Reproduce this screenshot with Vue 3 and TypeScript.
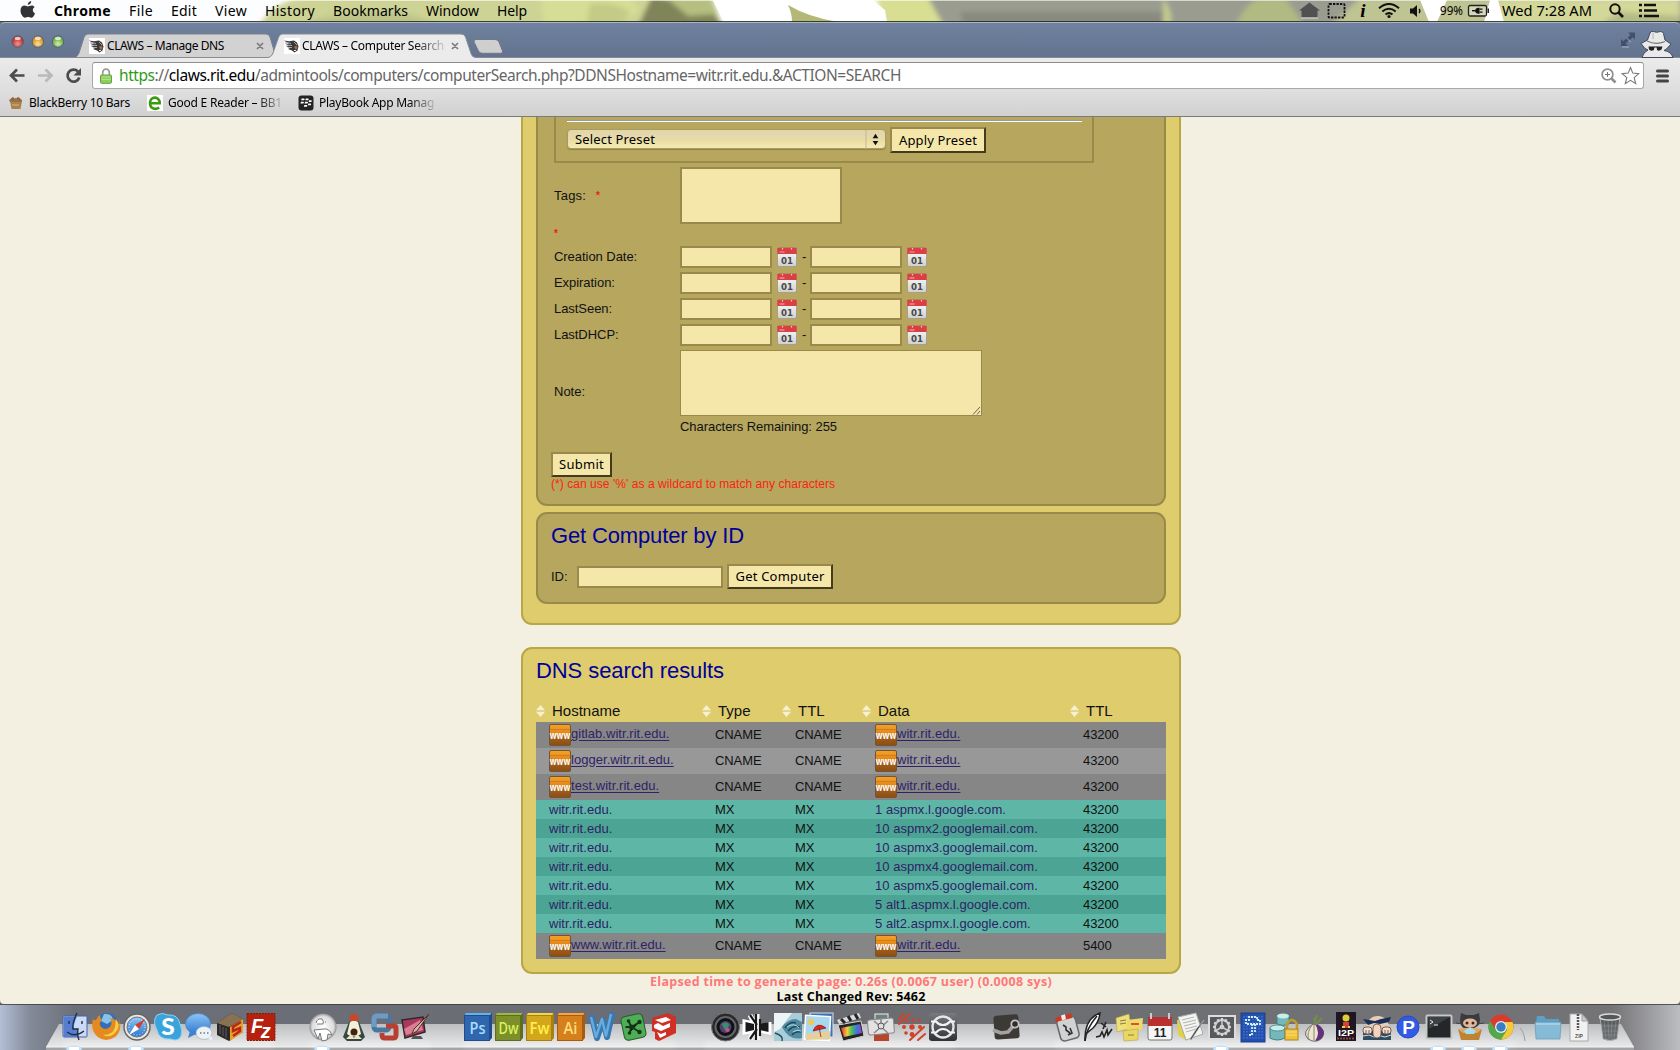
<script setup lang="ts">
import type { Directive } from 'vue'

interface Label { text: string; w: number }
interface DnsRow { host: string; type: string; data: string; ttl: string; tone: string }

// Spreads a label's letters so that it fills the given width in pixels.
const vFit: Directive<HTMLElement, number> = {
  mounted(el, { value }) {
    const n = (el.textContent || '').length
    const natural = el.getBoundingClientRect().width
    if (n) el.style.letterSpacing = ((value - natural) / n).toFixed(3) + 'px'
  },
}

const menus: Label[] = [
  { text: 'Chrome', w: 57 }, { text: 'File', w: 24 }, { text: 'Edit', w: 26 }, { text: 'View', w: 32 },
  { text: 'History', w: 50 }, { text: 'Bookmarks', w: 75 }, { text: 'Window', w: 53 }, { text: 'Help', w: 30 },
]
const dateFields = ['Creation Date:', 'Expiration:', 'LastSeen:', 'LastDHCP:']
const headers = ['Hostname', 'Type', 'TTL', 'Data', 'TTL']
const cname = (host: string, ttl: string, tone: string): DnsRow => ({ host, type: 'CNAME', data: 'witr.rit.edu.', ttl, tone })
const mx = (data: string, tone: string): DnsRow => ({ host: 'witr.rit.edu.', type: 'MX', data, ttl: '43200', tone })
const rows: DnsRow[] = [
  cname('gitlab.witr.rit.edu.', '43200', 'gray'),
  cname('logger.witr.rit.edu.', '43200', 'gray light'),
  cname('test.witr.rit.edu.', '43200', 'gray'),
  mx('1 aspmx.l.google.com.', 'teal light'),
  mx('10 aspmx2.googlemail.com.', 'teal'),
  mx('10 aspmx3.googlemail.com.', 'teal light'),
  mx('10 aspmx4.googlemail.com.', 'teal'),
  mx('10 aspmx5.googlemail.com.', 'teal light'),
  mx('5 alt1.aspmx.l.google.com.', 'teal'),
  mx('5 alt2.aspmx.l.google.com.', 'teal light'),
  cname('www.witr.rit.edu.', '5400', 'gray'),
]
const adobe = [
  { t: 'Ps', x: 478, c: '#2f66ad', d: '#1f4c8a', f: '#a6dcff', h: '#5fb3ee' },
  { t: 'Dw', x: 509, c: '#7c8f2b', d: '#5d6f1e', f: '#d8f25a', h: '#9db843' },
  { t: 'Fw', x: 540, c: '#d2a71c', d: '#a87f10', f: '#fff04a', h: '#f4d64a' },
  { t: 'Ai', x: 571, c: '#d5801c', d: '#a95a0e', f: '#ffdb7a', h: '#f4a63d' },
]
const running = [74, 136, 322, 1221, 1438, 1469, 1500]
const gear = [0, 30, 60, 90, 120, 150, 180, 210, 240, 270, 300, 330]
</script>

<template>
  <div class="desktop">
    <svg width="0" height="0" class="defs" aria-hidden="true">
      <defs>
        <linearGradient id="orange" x1="0" y1="0" x2="0" y2="1">
          <stop offset="0" stop-color="#f7a128" /><stop offset=".45" stop-color="#df8518" /><stop offset=".55" stop-color="#a9621a" /><stop offset="1" stop-color="#8a4d14" />
        </linearGradient>
        <linearGradient id="paper" x1="0" y1="0" x2="0" y2="1">
          <stop offset="0" stop-color="#fff" /><stop offset="1" stop-color="#cfcfcf" />
        </linearGradient>
        <linearGradient id="shelf" x1="0" y1="0" x2="0" y2="1">
          <stop offset="0" stop-color="#bdbec0" /><stop offset=".5" stop-color="#d3d4d5" /><stop offset="1" stop-color="#e9e9ea" />
        </linearGradient>
        <linearGradient id="back" x1="0" y1="0" x2="1" y2="0">
          <stop offset="0" stop-color="#b3bfd6" /><stop offset=".018" stop-color="#838a98" /><stop offset=".045" stop-color="#6b6f78" />
          <stop offset=".5" stop-color="#6a6c71" /><stop offset=".96" stop-color="#747477" /><stop offset="1" stop-color="#bcbdc1" />
        </linearGradient>
        <linearGradient id="blue" x1="0" y1="0" x2="0" y2="1">
          <stop offset="0" stop-color="#8cc4f5" /><stop offset="1" stop-color="#2c78d0" />
        </linearGradient>
        <linearGradient id="steel" x1="0" y1="0" x2="0" y2="1">
          <stop offset="0" stop-color="#777a7f" /><stop offset="1" stop-color="#2f3135" />
        </linearGradient>
        <linearGradient id="spectrum" x1="0" y1="0" x2="1" y2="0">
          <stop offset="0" stop-color="#e03030" /><stop offset=".3" stop-color="#f0d040" /><stop offset=".5" stop-color="#50c050" /><stop offset=".75" stop-color="#3878e0" /><stop offset="1" stop-color="#a040c0" />
        </linearGradient>
        <radialGradient id="silver"><stop offset="0" stop-color="#fff" /><stop offset=".8" stop-color="#dcdcdc" /><stop offset="1" stop-color="#8d8f92" /></radialGradient>
        <filter id="soft" x="-5%" y="-60%" width="110%" height="220%"><feGaussianBlur stdDeviation="2.5" /></filter>
        <symbol id="cal" viewBox="0 0 20 20">
          <rect x=".5" y="1" width="19" height="18.6" rx="1.6" fill="url(#paper)" stroke="#8d8880" stroke-width=".6" />
          <path d="M.3 1.500Q.3 .8 1 .8H19Q19.700 .8 19.700 1.500V7H.3Z" fill="#d93f43" /><path d="M2.500 5h5" stroke="#f0a09c" stroke-width="1.200" />
          <path d="M5.500 1v1.500M14.500 1v1.500" stroke="#f6c9c6" stroke-width="1.200" />
          <text x="10" y="16.900" text-anchor="middle" font-size="9.500" font-weight="700" fill="#484848" font-family="DejaVu Sans, sans-serif" textLength="12" lengthAdjust="spacingAndGlyphs">01</text>
        </symbol>
        <symbol id="www" viewBox="0 0 22 22">
          <rect x=".5" y=".5" width="21" height="21" rx="1.5" fill="url(#orange)" stroke="#6e5636" stroke-width="1" />
          <path d="M1 5.500H21" stroke="#c9791b" stroke-width=".8" />
          <text x="11" y="14.600" text-anchor="middle" font-size="11" font-weight="700" fill="#fff" font-family="Open Sans, sans-serif" textLength="20.500" lengthAdjust="spacingAndGlyphs">www</text>
        </symbol>
        <symbol id="tiger" viewBox="0 0 16 16">
          <rect width="16" height="16" fill="#fff" />
          <path d="M0 2.500l5 .8 5-.8 3 2 1.500 4-1 4-3 2-2.500-2-4-1.500 2-1-4-1.500 3-.5-4-2.500 4 .5Z" fill="#3a3a3a" />
          <path d="M1 4l6 1.500M2 7l6 .5M4 9.500l4 0M10 4l3 3" stroke="#b5b5b5" stroke-width=".9" fill="none" /><path d="M10 9l2.500-1.500 1 2.500-1.500 2Z" fill="#b06a48" /><path d="M10 12.500l1.800 0" stroke="#fff" />
        </symbol>
      </defs>
    </svg>

    <header class="menubar">
      <svg class="wallpaper" viewBox="0 0 1680 22" width="1680" height="22" aria-hidden="true">
        <rect width="1680" height="22" fill="#fcfdfe" />
        <g filter="url(#soft)">
          <path d="M260 26C266 12 276 6 290 0L300-4H712L722 26Z" fill="#cdd394" />
          <path d="M300 26Q330 10 400 12L450 26Z" fill="#bcc487" /><path d="M540-3h90l10 12-20 17h-75Z" fill="#d5de94" />
          <path d="M652-4l-14 30h85l-10-14-34-10Z" fill="#7f8558" /><path d="M590 4q25-3 40 8l-8 14h-36Z" fill="#c3cb86" /><path d="M664-4h46l8 18-30 2Z" fill="#b6bf80" />
          <path d="M876-4l8 30h62l-14-30Z" fill="#d8de92" />
          <path d="M926-6l18 32h740V-6Z" fill="#9a9c90" /><path d="M960 12h210v14h-206Z" fill="#888a7e" /><path d="M1163-2q10 12 8 26h-8Z" fill="#c5ca90" />
          <path d="M1235 26q10-22 24-28h26l20 28Z" fill="#b0ba82" /><path d="M1330 26l30-28h140l30 28Z" fill="#bfc493" /><path d="M1500-2h180v28h-190Z" fill="#d3d898" />
          <path d="M1600 24l20-12 60 4v10Z" fill="#b3bb85" />
        </g>
        <path d="M712-1l12 23h66l-3-18q22 13 50 18h50l-2-12-14-11ZM1420 0l9 22h8l10-22ZM1490 0l-6 22h20l-6-22Z" fill="#fff" />
        <path d="M788 5q20 12 50 17h-46q0-9-4-17Z" fill="#b4b877" />
        <path d="M0 .5H1680" stroke="#fff" stroke-opacity=".6" /><path d="M0 21.5H1680" stroke="#22251d" stroke-opacity=".85" />
      </svg>
      <svg class="apple" viewBox="0 0 16 18" width="16" height="18"><path d="M11.200 0c.2 2-1.600 3.900-3.400 3.800C7.600 2 9.400.2 11.200 0ZM15 12.400c-1 2.600-2.400 4.300-3.900 4.300-1.200 0-1.700-.7-3-.7s-1.900.7-3 .7C2.800 16.700.5 12.900.5 9.600.5 6.400 2.400 4.600 4.500 4.600c1.400 0 2.400.9 3.400.9.900 0 2.100-1 3.800-1 1.200 0 2.300.6 3 1.600-2.700 1.700-2.300 5.200.3 6.300Z" fill="#333" /></svg>
      <nav class="menus">
        <span v-for="m in menus" :key="m.text" v-fit="m.w">{{ m.text }}</span>
      </nav>
      <div class="status">
        <svg width="366" height="22" viewBox="1296 0 366 22">
          <path d="M1309.500 2.500L1320 10.500H1317.500V17.500H1301.500V10.500H1299Z" fill="#515151" /><path d="M1301 18h17" stroke="#ddd" />
          <rect x="1328.500" y="4" width="16" height="13.500" rx="1" fill="none" stroke="#111" stroke-width="1.800" stroke-dasharray="2.300 1.200" />
          <text x="1363" y="17" text-anchor="middle" font-family="Liberation Serif, serif" font-weight="700" font-style="italic" font-size="19">i</text>
          <g fill="none" stroke="#111" stroke-width="2"><path d="M1379 8.200q10-8.400 20 0M1382.300 11.500q6.700-5.400 13.400 0M1385.500 14.500q3.500-2.800 7 0" /></g><circle cx="1389" cy="16.500" r="1.600" fill="#111" />
          <path d="M1410 8.500h3l4-3.500v12l-4-3.500h-3Z" fill="#111" /><path d="M1419 9q1.800 2 0 4" stroke="#111" stroke-width="1.300" fill="none" />
          <text x="1440" y="15" font-size="12" textLength="23" lengthAdjust="spacingAndGlyphs">99%</text>
          <rect x="1468.500" y="5.500" width="18" height="10.500" rx="1.500" fill="#e4e5d5" fill-opacity=".6" stroke="#222" stroke-width="1.300" /><rect x="1487.500" y="8.500" width="1.500" height="4.500" fill="#222" />
          <path d="M1472 10.700h3.500" stroke="#111" stroke-width="1.400" /><path d="M1475 10.700q.5-3 3.500-3h1v6h-1q-3 0-3.500-3Z" fill="#111" /><path d="M1479.500 9.200h3M1479.500 12.200h3" stroke="#111" stroke-width="1.300" />
          <text x="1502" y="15.500" font-size="14" textLength="90" lengthAdjust="spacingAndGlyphs">Wed 7:28 AM</text>
          <circle cx="1615" cy="9" r="4.700" fill="none" stroke="#111" stroke-width="2" /><path d="M1618.500 12.500l4.500 4.500" stroke="#111" stroke-width="2.600" />
          <path d="M1639 5h3M1644 5h12M1639 10.500h3M1644 10.500h13M1639 16h3M1644 16h15" stroke="#111" stroke-width="2.700" />
        </svg>
      </div>
    </header>

    <section class="browser">
      <div class="tabstrip">
        <svg class="tabshapes" width="1680" height="36" viewBox="0 22 1680 36" aria-hidden="true">
          <defs>
            <radialGradient id="red" cy=".7"><stop offset="0" stop-color="#f5938d" /><stop offset="1" stop-color="#bc3833" /></radialGradient>
            <radialGradient id="amber" cy=".7"><stop offset="0" stop-color="#ffe09a" /><stop offset="1" stop-color="#d39325" /></radialGradient>
            <radialGradient id="green" cy=".7"><stop offset="0" stop-color="#cdf1a9" /><stop offset="1" stop-color="#70a848" /></radialGradient>
          </defs>
          <g stroke="#4e5667" stroke-width=".8"><circle cx="17.700" cy="41.500" r="5.700" fill="url(#red)" /><circle cx="37.900" cy="41.500" r="5.700" fill="url(#amber)" /><circle cx="58" cy="41.500" r="5.700" fill="url(#green)" /></g>
          <g fill="#fff" fill-opacity=".7"><ellipse cx="17.700" cy="38.400" rx="3" ry="1.700" /><ellipse cx="37.900" cy="38.400" rx="3" ry="1.700" /><ellipse cx="58" cy="38.400" rx="3" ry="1.700" /></g>
          <path d="M75 57.500Q78 56 79 53L84 37.500Q85 34 88 34H266Q269 34 270 37L276 57.500Z" fill="#d2d2d2" stroke="#7b818c" />
          <path d="M0 57.500H267Q271.500 57.500 273 53L278.500 37.500Q279.500 34 282.500 34H461Q464.500 34 465.500 37L471 53.500Q472 57.500 476 57.500H1680V60H0Z" fill="#ebebeb" stroke="#868b95" />
          <path d="M476 39.500H495Q498 39.500 499 42L502.500 51Q503 53.300 500.500 53.300H482Q479.500 53.300 478.500 51L474 42Q473.500 39.500 476 39.500Z" fill="#cfcfcf" stroke="#70788a" />
          <use href="#tiger" x="89" y="38" width="16" height="16" /><use href="#tiger" x="284" y="38" width="16" height="16" />
          <path d="M257 43l6 6m0-6l-6 6M452 43l6 6m0-6l-6 6" stroke="#7c7c7c" stroke-width="1.700" />
          <g fill="#42506a"><path d="M1628 32.500h7v7l-2.300-2.300-2.700 2.700-2.300-2.300 2.700-2.700ZM1621 46v-7l2.300 2.300 2.700-2.700 2.300 2.300-2.700 2.700 2.400 2.400Z" /></g><path d="M1622 47h7M1629 40.500l2 1.500" stroke="#b9c1cf" stroke-width=".8" />
          <path d="M1642 57.500q1-5 6-7.500l-3-1.500-4-5 6.500-3.500 2.500-7q.5-2 3.500-1.500l3 .8 4-.8q2.500 0 3 2l1.500 6.500 6 4-4.500 5-2.500 1.500q7 1 9 7Z" fill="#e9e9e9" stroke="#424a59" stroke-width="1" />
          <path d="M1647 41q9 4.500 18 .5" stroke="#777" stroke-width="1.200" fill="none" /><path d="M1653 33v6" stroke="#b3b3b3" fill="none" /><path d="M1648.500 46.500h6l-.5 3.500q-3.500 1.500-5-.5ZM1656.500 46.500h6l-1 3q-2.500 2-4.500.5Z" fill="#222" /><path d="M1654 47h3" stroke="#222" />
        </svg>
        <span class="tabname first"><span v-fit="117">CLAWS – Manage DNS</span></span>
        <span class="tabname second"><span v-fit="142">CLAWS – Computer Search</span></span>
      </div>
      <div class="toolbar">
        <svg class="nav" width="92" height="30" viewBox="0 60 92 30">
          <g fill="none" stroke-width="2.700"><path d="M24.500 75.500H11M17 69.500L11 75.500l6 6" stroke="#4c4c4c" /><path d="M38 75.500H51.500M45.500 69.500l6 6-6 6" stroke="#b9b9b9" /><path d="M78 71.500A6 6 0 1 0 79.300 77.500" stroke="#4c4c4c" /></g><path d="M81 68v7.500h-7.500Z" fill="#4c4c4c" />
        </svg>
        <div class="omnibox">
          <svg class="lock" width="12" height="16" viewBox="0 0 12 16"><path d="M2.700 8V4.500a3.300 3.300 0 0 1 6.600 0V8" fill="none" stroke="#9a9a9a" stroke-width="1.700" /><rect x=".5" y="7" width="11" height="8.300" rx="1" fill="#8fcf62" stroke="#65a23e" /><path d="M1.500 9h9M1.500 11.500h9" stroke="#b7e495" stroke-width=".8" /></svg>
          <span class="url" v-fit="782"><span class="scheme">https</span>://<span class="host">claws.rit.edu</span>/admintools/computers/computerSearch.php?DDNSHostname=witr.rit.edu.&amp;ACTION=SEARCH</span>
          <svg class="actions" width="40" height="20" viewBox="1600 66 40 20"><circle cx="1607.500" cy="74.500" r="5.400" fill="none" stroke="#8f8f8f" stroke-width="1.700" /><path d="M1611.500 78.500l4 4" stroke="#8f8f8f" stroke-width="2.600" /><path d="M1605 74.500h5M1607.500 72v5" stroke="#777" /><path d="M1630.500 67.500l2.300 5.600 6 .5-4.600 4 1.500 6-5.200-3.300-5.200 3.300 1.500-6-4.600-4 6-.5Z" fill="#fff" stroke="#777" stroke-width="1.100" /></svg>
        </div>
        <svg class="burger" width="13" height="14" viewBox="0 0 13 14"><path d="M1.500 2h10M1.500 7h10M1.500 12h10" stroke="#444" stroke-width="3" stroke-linecap="round" /></svg>
      </div>
      <div class="bookmarks">
        <svg width="14" height="14" viewBox="0 0 14 14"><path d="M1 5h12l-1.500 8h-9Z" fill="#a9834b" /><path d="M0 4l4-3 2 2 3-2 4 3v2H1Z" fill="#8c7550" /><path d="M3 2l2 2M9 2l2 2" stroke="#cb4736" stroke-width="2" /><path d="M6 3h2" stroke="#5c9a4e" stroke-width="2" /><path d="M3 9h7" stroke="#d9b77c" /></svg>
        <span class="bm1"><span v-fit="101">BlackBerry 10 Bars</span></span>
        <svg class="ebox" width="16" height="16" viewBox="0 0 16 16"><rect width="16" height="16" fill="#fff" /><path d="M3 8.200H12.700C13 1 3 .5 3 8c0 6.500 6 6.800 9.200 4.500" fill="none" stroke="#3a9a12" stroke-width="2.600" /></svg>
        <span class="bm2 fade"><span v-fit="114">Good E Reader – BB1</span></span>
        <svg width="16" height="16" viewBox="0 0 16 16"><rect x=".5" y=".5" width="15" height="15" rx="3" fill="#242424" /><g fill="#fff"><path d="M3.600 3.500h2.600q1 .9-.2 1.800H3.200ZM7.700 3.500h2.600q1 .9-.2 1.800H7.300ZM2.900 6.700h2.600q1 .9-.2 1.800H2.500ZM7 6.700h2.600q1 .9-.2 1.800H6.600ZM11 5.300h2.400q1 .9-.2 1.700H10.600ZM10.300 8.600h2.400q1 .9-.2 1.700H9.900ZM6.300 10h2.600q1 .9-.2 1.800H5.900Z" /></g></svg>
        <span class="bm3 fade"><span v-fit="115">PlayBook App Manag</span></span>
      </div>

      <main class="page">
        <section class="card search">
          <div class="pane form">
            <div class="preset">
              <div class="rule"></div>
              <div class="presetrow">
                <div class="select"><span v-fit="80">Select Preset</span><svg width="20" height="19" viewBox="0 0 20 20"><path d="M.5 0v20" stroke="#c2b68b" /><path d="M7.500 8.600h6L10.500 4ZM7.500 11.500h6l-3 4.600Z" fill="#111" /></svg></div>
                <div class="btn apply"><span v-fit="78">Apply Preset</span></div>
              </div>
            </div>
            <div class="row tags"><label>Tags: <i class="star">*</i></label><div class="box tagbox"></div></div>
            <div class="starrow"><i class="star">*</i></div>
            <div v-for="d in dateFields" :key="d" class="row date">
              <label>{{ d }}</label><div class="box day"></div><svg width="20" height="20"><use href="#cal" /></svg><b class="dash">-</b><div class="box day"></div><svg width="20" height="20"><use href="#cal" /></svg>
            </div>
            <div class="row note"><label>Note:</label>
              <div><div class="area"><svg width="9" height="9" viewBox="0 0 9 9"><path d="M1 8.500L8 1M5 8.500L8 5" stroke="#555" stroke-width=".9" /></svg></div><p><span v-fit="157">Characters Remaining: 255</span></p></div>
            </div>
            <div class="btn submit"><span v-fit="45">Submit</span></div>
            <p class="hint"><span v-fit="284">(*) can use '%' as a wildcard to match any characters</span></p>
          </div>
          <div class="pane byid">
            <h2><span v-fit="193">Get Computer by ID</span></h2>
            <div class="idrow"><label>ID:</label><div class="box idbox"></div><div class="btn get"><span v-fit="89">Get Computer</span></div></div>
          </div>
        </section>

        <section class="card results">
          <h2><span v-fit="188">DNS search results</span></h2>
          <div class="grid head">
            <span v-for="(h, i) in headers" :key="i"><svg width="9" height="12" viewBox="0 0 9 12"><path d="M0 5.300L4.500 0 9 5.300ZM0 6.700h9L4.500 12Z" fill="#f6f0d2" /></svg><em>{{ h }}</em></span>
          </div>
          <div v-for="(r, i) in rows" :key="i" class="grid line" :class="r.tone">
            <span class="link"><svg v-if="r.type === 'CNAME'" width="22" height="22"><use href="#www" /></svg><a>{{ r.host }}</a></span>
            <span class="kind">{{ r.type }}</span><span class="kind">{{ r.type }}</span>
            <span class="link"><svg v-if="r.type === 'CNAME'" width="22" height="22"><use href="#www" /></svg><a>{{ r.data }}</a></span>
            <span class="kind">{{ r.ttl }}</span>
          </div>
        </section>
        <footer>
          <p class="elapsed"><span v-fit="402">Elapsed time to generate page: 0.26s (0.0067 user) (0.0008 sys)</span></p>
          <p><span v-fit="149">Last Changed Rev: 5462</span></p>
        </footer>
      </main>
    </section>

    <svg class="dock" width="1680" height="46" viewBox="0 1004 1680 46">
      <rect y="1004" width="1680" height="46" fill="url(#back)" />
      <path d="M0 1004h1680" stroke="#33363b" stroke-width="1.600" />
      <path d="M59 1024H1621L1634 1047H46Z" fill="url(#shelf)" /><path d="M46 1047H1634V1050H46Z" fill="#a3a4a6" /><path d="M46 1047H1634" stroke="#f6f6f6" stroke-width="1.200" />
      <g fill="#fff" fill-opacity=".32" filter="url(#soft)"><path d="M64 1042h210v5H64ZM310 1042h120v5H310ZM464 1042h212v5H464ZM705 1042h250v5H705ZM1055 1042h460v5h-460Z" /></g>
      <g v-for="x in running" :key="x" :transform="`translate(${x} 1048.500)`"><ellipse rx="8" ry="3" fill="#bfe3ff" /><rect x="-5" y="-1.500" width="10" height="3" fill="#fff" /></g>

      <!-- Finder, Firefox, Safari, Skype, Messages, archive cube, FileZilla -->
      <g transform="translate(75 1027)"><rect x="-12" y="-11" width="24" height="21" rx="1" fill="#c9dbf6" stroke="#4863a8" /><path d="M-11.500-10.500H2Q-2-2-1 2h3l1 8h-14.500Z" fill="#567ed0" /><path d="M2-14Q-3-4-2 2H3Q2 8 4 13M-8 5Q0 11 9 4M-6-6v3M7-6v3" fill="none" stroke="#222c45" stroke-width="1.400" /></g>
      <g transform="translate(106 1027)"><circle cx="1" cy="-3" r="11" fill="#356fb5" /><path d="M-2-13q8-1 9 6l-6 4-6-3Z" fill="#86c3e9" /><path d="M-13-8q2 2 3 1 2-4 4-5 0 4 2 5-4 3-1 7 4 4 9 0 3-4 0-9 8 1 9 8 1-2 0-8 4 12-4 19-9 6-17 0-8-6-5-18Z" fill="#e68a20" /><path d="M10-8q6 8-2 15-5 4-11 1 10 0 12-8Z" fill="#f7cd42" /></g>
      <g transform="translate(137 1027)"><circle r="13" fill="#e7e7e7" stroke="#666" stroke-width="1.500" /><circle r="10" fill="url(#blue)" stroke="#777" stroke-width="1" /><circle r="8" fill="none" stroke="#e5f2fd" stroke-dasharray="1 2" /><path d="M8-8L2 2-2-2Z" fill="#d83d2a" /><path d="M-8 8L2 2-2-2Z" fill="#fff" /></g>
      <g transform="translate(168 1027)"><path d="M-11-12Q-6-15 0-12 10-13 12-3 15 3 13 9 10 15 3 12-9 13-11 3-16-6-11-12Z" fill="#3ba3dc" stroke="#8fd1f4" /><text x="0" y="8" text-anchor="middle" font-family="Lato" font-size="22" font-weight="900" fill="#fff" textLength="13.500" lengthAdjust="spacingAndGlyphs">S</text></g>
      <g transform="translate(199 1027)"><ellipse cx="-1" cy="-3" rx="12.500" ry="10.500" fill="url(#blue)" stroke="#4386c5" stroke-width=".7" /><path d="M-9 4l-2 7 8-4Z" fill="#3c82d2" /><ellipse cx="5" cy="6" rx="8" ry="6.500" fill="#edf2f7" stroke="#9eb1c6" stroke-width=".7" /><path d="M9 11l4 3v-5Z" fill="#edf2f7" /><path d="M1 6h1.500M4.500 6h1.500M8 6h1.500" stroke="#6c7a8a" stroke-width="1.700" /></g>
      <g transform="translate(230 1027)"><path d="M-13-4L2-14l11 6V5L-1 14-13 8Z" fill="#2c2a28" /><path d="M-13-4L2-14l11 6L-1 0Z" fill="#887252" /><path d="M0 0L13-8V5L0 14Z" fill="#e7a425" /><path d="M11-5L3 0v4l7-3v3L3 9" fill="none" stroke="#bb261c" stroke-width="2.500" /><path d="M-10-2v9M-7 0v9M-4 1v10" stroke="#6b6a68" stroke-width=".8" /></g>
      <g transform="translate(261 1027)"><rect x="-14" y="-13.500" width="28" height="27" fill="#b5200f" stroke="#82170c" stroke-dasharray="2 1" /><text x="-10" y="6" font-family="Liberation Sans" font-size="20" font-style="italic" font-weight="700" fill="#fff">F<tspan dx="-2.500" dy="4.500">z</tspan></text></g>
      <!-- Growl, rocket, VMware, sketch pad -->
      <g transform="translate(323 1027)"><circle r="13.500" fill="url(#silver)" /><path d="M-7-4q1-5 6-4 2 2 1 5h-6M2-5h1M-9 3l4 9 2-6 2 8 5-1 1-6 4 1q-3-7-8-6Z" fill="#fff" stroke="#6b6b6b" stroke-width=".9" /></g>
      <g transform="translate(354 1027)"><path d="M-5-5q5-6 10 0l6 15-4 4H-7l-4-4Z" fill="#344741" /><path d="M-4-5q4-3 8 0l3 12q-7 5-14 0Z" fill="#f4efd9" /><path d="M-4-6q-2-5 2-7h4q4 2 2 7Z" fill="#c7472c" /><path d="M-8 12l5-5 3 4 3-4 5 5Z" fill="#eee4c7" /><circle cy="5" r="3.500" fill="#42230e" /></g>
      <g transform="translate(385 1027)" fill="none" stroke-width="5"><rect x="-11" y="-11" width="15" height="14" rx="3" stroke="#49769f" /><path d="M1-1h8q2 0 2 2v7q0 3-3 3H0q-3 0-3-3V6" stroke="#b74032" /><path d="M-11 0v-8q0-3 3-3H3" stroke="#6e9bc4" /></g>
      <g transform="translate(416 1027)"><path d="M-14-7L7-10l2 15-20 6Z" fill="#a8385c" stroke="#2f292a" stroke-width="1.500" /><path d="M-12 2L4-7l3 10-17 5Z" fill="#dc7d94" /><path d="M13-13L1 4l-5 3 2-5Z" fill="#d3b4a8" stroke="#51322a" /><path d="M-5 12h12l-2-3h-8Z" fill="#555" /></g>
      <!-- Creative suite -->
      <g v-for="a in adobe" :key="a.t" :transform="`translate(${a.x} 1027)`"><path d="M-14-11l2-3H13v26l-2 2Z" :fill="a.h" /><rect x="-13.500" y="-11.500" width="25" height="25" :fill="a.c" :stroke="a.d" /><path d="M12-12l2-2v25l-2 2Z" :fill="a.d" /><text x="-.5" y="7" text-anchor="middle" font-family="Open Sans" font-size="16" font-weight="600" :fill="a.f" :textLength="a.t === 'Ps' ? 16 : a.t === 'Ai' ? 14 : 20" lengthAdjust="spacingAndGlyphs">{{ a.t }}</text></g>
      <!-- Word, OmniGraffle, SketchUp -->
      <g transform="translate(602 1027)"><path d="M-10-9L-5 11 1-7 5 10 10-12" fill="none" stroke="#3478b4" stroke-width="6" stroke-linejoin="round" stroke-linecap="round" /><path d="M-11-10L-6 10 0-8 4 9 9-13" fill="none" stroke="#68aadb" stroke-width="2.500" stroke-linejoin="round" /></g>
      <g transform="translate(633.500 1027)"><rect x="-11" y="-12" width="22" height="24" rx="4" transform="rotate(-12)" fill="#4fae55" stroke="#255c2a" /><path d="M-4 6L-2 0l8-5M-2 0l8 5M-2 0l-3-6M-2 0h-6" stroke="#143617" stroke-width="1.800" /><g fill="#143617"><circle cx="-2" r="2.500" /><circle cx="6" cy="-5" r="2.200" /><circle cx="6" cy="5" r="2.200" /><circle cx="-5" cy="-6" r="1.800" /><circle cx="-4" cy="6" r="1.800" /></g></g>
      <g transform="translate(664 1027)"><path d="M-12-9L4-14l8 4V6L-5 14-9 12V5L-12 4Z" fill="#cf2f24" /><path d="M-9-7L2-10l5 3-9 3ZM-10-2l4-2 5 3 7-3v4L-3 4-10 1ZM-7 5l4 2 5-2v3l-6 3Z" fill="#fff" /></g>
      <!-- Camera, butterfly, rose, photos, clapper, machine, dots, wheel -->
      <g transform="translate(725.500 1027)"><circle r="14" fill="#26282a" stroke="#777" /><circle r="10" fill="#111" stroke="#62666b" stroke-width="2" /><circle r="6" fill="#573c6b" /><path d="M-4-3q5-4 8 1l-4 6Z" fill="#388e72" /><circle cx="2" cy="3" r="2" fill="#c1568d" /></g>
      <g transform="translate(757 1027)"><g stroke="#fff" stroke-width="5" fill="none"><path d="M-12-5v10L-2 3v-6ZM12-5V5L2 3v-6M-7-12L0 2M-7 12L0-2M0-13v26" /></g><g stroke="#1a1a1a" stroke-width="2.200" fill="none"><path d="M-7-12L0-2M-7 12L0 2M-1-13v26M3-8V9" /></g><path d="M-11.500-5L-3-3v6l-8.500 2ZM11.500-5L3-3v6l8.500 2Z" fill="#1a1a1a" /></g>
      <g transform="translate(788 1027)"><rect x="-14" y="-14" width="28" height="28" fill="#a9ccd9" /><path d="M-14-14H4L-8 2l-6 3Z" fill="#edf4f7" /><path d="M-6 0q6-8 14-8l6 3v16q-13 3-20-11Z" fill="#4f8aa0" /><path d="M-3 1q5-7 11-5M0 4q5-6 12-4M4 8q3-4 9-3M-6 14q2-5-7-8" fill="none" stroke="#1c4a5d" stroke-width="1.500" /><path d="M-1 0q7-5 12 1M5 5q4-3 8-1" stroke="#b8dce7" fill="none" /></g>
      <g transform="translate(819 1027)"><rect x="-9" y="-14" width="23" height="24" fill="#3f72b4" stroke="#d9dfe7" /><rect x="-14" y="-11" width="25" height="24" transform="rotate(3)" fill="#a8d9ef" stroke="#fff" stroke-width="1.500" /><path d="M-13 7l24-3v8l-24 1Z" fill="#e8cf98" /><circle cx="-8" cy="-5" r="3" fill="#f6c94b" /><path d="M-6 4q4-10 13-3ZM0 0l2 10" fill="#db2d20" stroke="#8b201a" stroke-width=".8" /></g>
      <g transform="translate(850 1027)"><path d="M-12-2L11-6l3 15-21 5Z" fill="#242528" stroke="#d3d3d3" /><path d="M-9 1l19-4 2 9-18 4Z" fill="url(#spectrum)" /><path d="M-13-7L9-14l2 5-22 6Z" fill="#dadada" /><path d="M-9-8l4 4M-2-11l3 5M5-13l3 5" stroke="#252525" stroke-width="3" /></g>
      <g transform="translate(881 1027)"><rect x="-6" y="-13" width="13" height="26" fill="#6f7f7f" stroke="#eee" /><path d="M-7 7H8v7H-7Z" fill="#b7472a" /><rect x="-13" y="-8" width="26" height="15" rx="2" transform="rotate(-5)" fill="#e2e2e2" stroke="#888" /><path d="M-7-6L7 6M7-6L-7 6M0-9V2" stroke="#8b8b8b" stroke-width="1.600" /><circle cy="-1" r="3" fill="#ddd" stroke="#555" /></g>
      <g transform="translate(912 1027)" fill="#d0432a"><circle r="2.700" /><circle cx="-8" r="2" /><circle cx="8" r="2" /><circle cy="7.500" r="2.400" /><circle cx="1" cy="-7" r="1.800" /><circle cx="-6" cy="6" r="1.800" /><circle cx="7" cy="-7" r="1.600" /><circle cx="-5" cy="-6" r="1.600" /><path d="M-13-3L-2-13M-2 13L12 0M6 13l7-6M-13-8l5-5" stroke="#d0432a" stroke-width="2" stroke-linecap="round" /></g>
      <g transform="translate(943 1027)"><rect x="-14" y="-14" width="28" height="28" rx="3" fill="url(#steel)" /><circle r="10.500" fill="none" stroke="#e6e6e6" stroke-width="2.300" /><path d="M-12-5.500h5q3 3.500 7 3.500t7-3.500h5M-12 5.500h5q3-3.500 7-3.500t7 3.500h5" fill="none" stroke="#f1f1f1" stroke-width="2.200" /></g>
      <!-- Steam, disk tool, quill, Stickies, Calendar, TextEdit, Preferences -->
      <g transform="translate(1006 1027)"><rect x="-12" y="-12" width="25" height="24" rx="3" transform="rotate(-4)" fill="#3d3a36" /><path d="M-13 3l8 3 7-1 7-8" stroke="#a2a2a0" stroke-width="3.500" fill="none" stroke-linejoin="round" /><circle cx="9" cy="-3" r="3.700" fill="#302e2c" stroke="#c4c4c2" stroke-width="1.800" /></g>
      <g transform="translate(1067 1027)"><rect x="-9" y="-9" width="19" height="22" rx="4" transform="rotate(-15)" fill="#d1d2d3" stroke="#66686a" stroke-width="1.500" /><path d="M-12-9L4-14l1 5L-11-5Z" fill="#cd3822" /><path d="M-6-11.500l4-1.200 1 5-4 1Z" fill="#eee" /><path d="M-4-2l3 2 0 3 4 3M3 1l2 5-4 2" fill="none" stroke="#303234" stroke-width="1.600" /></g>
      <g transform="translate(1098 1027)" fill="none"><path d="M-13 14Q-14-8 2-14q-1 9-7 15l-6 5" fill="#fff" stroke="#222" stroke-width="1.500" /><path d="M-13 14Q-12 2-1-11M-2 10l4-1 2-4 2 5 3-7 1 5 4-6M3-4l5 4M8-5L5 2" stroke="#222" stroke-width="1.600" /></g>
      <g transform="translate(1129 1027)"><path d="M-13-9L0-13l2 14-14 4Z" fill="#f0df77" stroke="#b2a353" stroke-width=".6" /><path d="M-2-7L14-9l-1 12-15 1Z" fill="#ecd96c" /><path d="M-6 4L9 2v11l-14 1Z" fill="#ead75f" stroke="#b2a353" stroke-width=".6" /><path d="M2-3h8" stroke="#dc5426" stroke-width="2" /><path d="M-9-6l6-1M-9-3l6-1M-1 8h6" stroke="#827c4b" /></g>
      <g transform="translate(1160 1027)"><rect x="-12" y="-10" width="24" height="23" rx="2" fill="#f5f5f5" stroke="#777" /><path d="M-12-10h24v9h-24Z" fill="#ba3030" /><path d="M-9-14v6M9-14v6" stroke="#ccc" stroke-width="2" /><text y="9.500" text-anchor="middle" font-family="Liberation Sans" font-size="12" font-weight="700" fill="#222">11</text></g>
      <g transform="translate(1191 1027)"><path d="M-14-7l1 15 9 6-4-21Z" fill="#e4cf49" /><path d="M-13-10L5-14l7 21-17 6Z" fill="#f3f3f0" stroke="#aaa" /><path d="M-9-7l12-3M-8-4l13-3M-7-1l12-3M-6 2l12-3M-5 5l10-3" stroke="#aaa" stroke-width=".9" /><path d="M13-7l-5 8-8 12-1-1 7-11Z" fill="#333b45" stroke="#bbb" stroke-width=".6" /></g>
      <g transform="translate(1222 1027)"><rect x="-13" y="-11" width="26" height="23" fill="#575a5c" stroke="#ddd" stroke-width="2" /><circle r="7" fill="none" stroke="#c4c6c7" stroke-width="2" /><path v-for="g in gear" :key="g" d="M0-9v3" :transform="`rotate(${g})`" stroke="#d4d5d6" stroke-width="2.300" /><circle r="2.300" fill="#ddd" /><path d="M0 0v-6M0 0l5 3M0 0l-5 3" stroke="#ccc" stroke-width="1.500" /></g>
      <g transform="translate(1253 1027)"><rect x="-12" y="-14" width="24" height="29" fill="#234fae" stroke="#1c3f91" /><path d="M-9-11v23M-6-11v23M-3-11v23M0-11v23M3-11v23M6-11v23M9-11v23" stroke="#3f70cb" stroke-width="1.600" stroke-dasharray="1.600 1.400" /><path d="M-7-3v-4h3v-3h8v3h3v4H-7M-1-3v11h-3M2-3V6" stroke="#d3f1ff" stroke-width="1.800" stroke-dasharray="2 1" fill="none" /></g>
      <g transform="translate(1284 1027)"><path d="M-7-11v8q6 3 12 0v-8M-14 1v10q7 4 15 0V1" fill="#73b8ba" stroke="#467e80" /><ellipse cx="-1" cy="-11" rx="6" ry="2.500" fill="#c7eeed" /><ellipse cx="-6.500" cy="1" rx="7.500" ry="3" fill="#c7eeed" stroke="#579092" /><path d="M3 2v-5q5-8 10 0v5" stroke="#bd9b30" stroke-width="2.500" fill="none" /><rect x="1" y="2" width="13" height="11" fill="#edc23d" stroke="#ad821f" /><path d="M2 5h11M2 8h11" stroke="#ffdf76" /></g>
      <g transform="translate(1315 1027)"><path d="M-2-3q-12 8-5 15 8 5 14-1 5-7-5-14Z" fill="#eee5d0" stroke="#666" /><path d="M0-3q6 9 0 17 8-1 9-8-1-7-9-9" fill="#63327d" /><path d="M-3-2q-6 8-3 15M-1-2v15" stroke="#8c846c" fill="none" /><path d="M-1-2l3-10M1-3l6-6M0-4l-1-5" stroke="#758c4b" stroke-width="2" /></g>
      <!-- I2P, peeking face, Pandora, Terminal, GitHub, Chrome -->
      <g transform="translate(1346 1027)"><rect x="-10" y="-15" width="20" height="29" fill="#201522" /><circle cy="-9" r="3.500" fill="#e1ce34" /><path d="M-3-5h6v6h-6Z" fill="#d34239" /><path d="M-4 0h3M2 0h2" stroke="#e4d244" stroke-width="2" /><text y="8.500" text-anchor="middle" font-family="Liberation Sans" font-size="9" font-weight="700" fill="#fff" textLength="16" lengthAdjust="spacingAndGlyphs">I2P</text><path d="M-9 11.500h18" stroke="#8b463e" stroke-width="2" stroke-dasharray="2 1" /></g>
      <g transform="translate(1377 1027)"><path d="M-11 0Q-8-12 2-11q8 1 10 9v6h-24Z" fill="#e8cdb6" /><path d="M-14-8l12 2 6-2 10-2-2 5-9 2-6-1-6 2Z" fill="#182d58" /><path d="M-14 4H14V13H-14Z" fill="#314b60" /><path d="M-14 9l6-1 5 2 7-1 4 1 6-2" stroke="#d9dee0" fill="none" /><rect x="-4" y="-3" width="8" height="14" rx="4" fill="#f5d3bc" stroke="#444" stroke-width=".7" /><g fill="#f5dccb" stroke="#54443d" stroke-width=".8"><rect x="-14" y="0" width="9" height="7" rx="3" /><rect x="5" y="0" width="9" height="7" rx="3" /></g><path d="M-11 3v4M-8 3v4M8 3v4M11 3v4" stroke="#54443d" stroke-width=".8" /></g>
      <g transform="translate(1408 1027)"><circle r="11" fill="#315be6" stroke="#284abe" /><text x=".5" y="6.700" text-anchor="middle" font-family="Liberation Sans" font-size="19" font-weight="700" fill="#fff">P</text></g>
      <g transform="translate(1439 1027)"><rect x="-12.500" y="-11.500" width="25" height="23" rx="1" fill="#242729" stroke="#c7c7c5" stroke-width="2" /><path d="M-9-7l3 2-3 2M-5-2h4" stroke="#eee" fill="none" /><path d="M-11-10H11L-10 2Z" fill="#fff" fill-opacity=".12" /></g>
      <g transform="translate(1470 1027)"><path d="M-9-14l5 2H4l5-2 1 7Q10 1 0 2T-10-7Z" fill="#383b40" /><path d="M-14-4l7 1M14-4L7-3" stroke="#444" /><ellipse cy="-4" rx="7" ry="4.500" fill="#e6b899" /><circle cx="-3" cy="-4" r="1.500" fill="#3d241d" /><circle cx="3" cy="-4" r="1.500" fill="#3d241d" /><path d="M-12 2l6 3H6l6-3-3 11H-9Z" fill="#bd8435" /><path d="M-12 2l5-1H7l5 1-5 4H-7Z" fill="#d9ab66" /><path d="M-6 4L0 0 6 4 4 7H-4Z" fill="#a7dced" /></g>
      <g transform="translate(1501 1027)"><circle r="12.500" fill="#d93c2c" /><path d="M-11-6A12.500 12.500 0 0 0 1 12.500L6 3H-5Z" fill="#51a94b" /><path d="M11.500-5A12.500 12.500 0 0 1 0 12.500L6 3 4-5Z" fill="#f0cb3a" /><circle r="6" fill="#eee" /><circle r="4.700" fill="#397dc4" /></g>
      <path d="M1520 1028q4 4 5 13" stroke="#9b9c9e" fill="none" />
      <g transform="translate(1548 1027)"><path d="M-11-11h7l2 3H11V12H-12V-5Z" fill="#5f9fc5" /><path d="M-13-5H13L12 12H-12Z" fill="#86bbd8" stroke="#6299b8" stroke-width=".7" /><path d="M-12-3h24" stroke="#c3e1ee" /></g>
      <g transform="translate(1579 1027)"><path d="M-9-13H3l6 7v20H-9Z" fill="#f1f1f1" stroke="#aaa" /><path d="M3-13v7h6Z" fill="#ccc" stroke="#999" /><path d="M-1-13V3" stroke="#555" stroke-width="2.500" stroke-dasharray="2 1" /><text y="11" text-anchor="middle" font-family="Liberation Sans" font-size="5" font-weight="700" fill="#555">ZIP</text></g>
      <g transform="translate(1610 1027)"><path d="M-10-10l3 22q7 3 14 0L10-10Z" fill="#55585b" fill-opacity=".85" stroke="#bbb" stroke-width=".8" /><ellipse cy="-10" rx="10.500" ry="3" fill="#54575a" stroke="#dadada" stroke-width="1.500" /><path d="M-6-6l2 18M-2-6l1 18M2-6L1 12M6-6L4 12M-8-1H8M-8 4H8M-7 8H7" stroke="#8f9193" stroke-width=".6" /></g>
    </svg>
  </div>
</template>

<style>
html, body { margin: 0; overflow: hidden; }
</style>

<style scoped>
.desktop { width: 1680px; height: 1050px; overflow: hidden; font-family: "Noto Sans", "Open Sans", sans-serif; color: #000; background: #6a6c71; }
.defs { position: absolute; }
svg { display: block; flex: none; }
p, h2 { margin: 0; }
span { white-space: nowrap; }

.menubar { position: relative; height: 22px; display: flex; align-items: center; }
.wallpaper { position: absolute; inset: 0; }
.apple { position: relative; margin-left: 20px; margin-top: -3px; }
.menus { position: relative; display: flex; gap: 18px; margin-left: 18px; font-size: 14px; line-height: 20px; }
.menus span { display: inline-block; }
.menus span:first-child { font-weight: 700; }
.status { position: relative; margin-left: auto; margin-right: 18px; }

.tabstrip { position: relative; height: 36px; display: flex; background: linear-gradient(#70829f, #62728f); border-top: 1px solid #a9b4c6; box-sizing: border-box; border-radius: 5px 5px 0 0; font-size: 12px; line-height: 16px; }
.tabshapes { position: absolute; left: 0; top: -1px; }
.tabname { position: relative; margin-top: 15px; overflow: hidden; }
.tabname span { display: inline-block; }
.first { margin-left: 107px; width: 140px; }
.second { margin-left: 55px; width: 142px; -webkit-mask: linear-gradient(90deg, #000 78%, rgba(0,0,0,.15)); mask: linear-gradient(90deg, #000 78%, rgba(0,0,0,.15)); }

.toolbar { height: 33px; display: flex; align-items: flex-start; background: linear-gradient(#ebebeb, #dedede); }
.nav { margin-top: 2px; }
.omnibox { margin-top: 4px; width: 1552px; height: 27px; box-sizing: border-box; border: 1px solid #a9a9a9; border-top-color: #8d8d8d; border-radius: 3px; background: #fff; display: flex; align-items: center; }
.lock { margin-left: 7px; }
.url { display: inline-block; margin-left: 7px; font-size: 15.500px; line-height: 23px; padding-bottom: 1px; color: #666; }
.scheme { color: #329a1b; }
.host { color: #000; }
.actions { margin-left: auto; margin-right: 3px; }
.burger { margin: 11px 0 0 12px; }

.bookmarks { height: 26px; display: flex; align-items: center; padding-left: 9px; padding-bottom: 1px; box-sizing: border-box; background: linear-gradient(#dedede, #d1d1d1); border-bottom: 1px solid #7b7b7b; font-size: 12px; line-height: 16px; }
.bookmarks span span { display: inline-block; }
.bm1 { margin-left: 6px; width: 118px; }
.bm2 { margin-left: 5px; width: 114px; margin-right: 16px; }
.bm3 { margin-left: 5px; width: 115px; }
.fade { -webkit-mask: linear-gradient(90deg, #000 78%, rgba(0,0,0,.15)); mask: linear-gradient(90deg, #000 78%, rgba(0,0,0,.15)); }

.page { height: 887px; overflow: hidden; box-sizing: border-box; padding-left: 521px; background: #f3f0e2; font-family: "Liberation Sans", Arial, sans-serif; font-size: 13px; line-height: 16px; color: #111; border-radius: 0 0 4px 4px; }
.card { width: 660px; box-sizing: border-box; border: 2px solid #b9a645; background: #dfcc6d; }
.search { height: 508px; border-top: 0; border-radius: 0 0 11px 11px; padding: 0 13px; }
.pane { box-sizing: border-box; width: 630px; background: #b6a65e; border: 2px solid #998a4b; }
.form { height: 389px; border-top: 0; border-radius: 0 0 11px 11px; }
.preset { box-sizing: border-box; margin-left: 16px; width: 540px; height: 46px; border: 2px solid #998a4b; border-top: 0; padding: 3px 9px 0 11px; }
.rule { height: 1px; width: 515px; background: #9a9a9a; border-bottom: 1px solid #fff; }
.presetrow { display: flex; gap: 4px; margin-top: 5px; }
.select { margin-top: 2px; box-sizing: border-box; width: 319px; height: 20px; border-radius: 4px; border: 1px solid #a89b62; background: linear-gradient(#e2d5a6, #e6dab0 50%, #e9dc9f 52%, #f5e9b6); display: flex; justify-content: space-between; align-items: center; padding-left: 7px; box-shadow: 0 1px 1px rgba(60,50,10,.3); font-family: "Noto Sans", sans-serif; color: #000; }
.select span { padding-bottom: 1px; }
.btn { box-sizing: border-box; border: 2px solid; border-color: #998a4b #443b1d #443b1d #998a4b; background: #f5e7a9; font-family: "Noto Sans", sans-serif; font-size: 13px; line-height: 22px; color: #000; text-align: center; }
.btn span, .select span, .page p span, h2 span { display: inline-block; }
.apply { width: 96px; height: 26px; }
.row { display: flex; align-items: center; margin-left: 16px; }
.row label { width: 126px; }
.box { box-sizing: border-box; background: #f5e7a9; border: 2px solid #998a4b; }
.tags { margin-top: 4px; height: 57px; }
.tags label { padding-top: 1px; letter-spacing: .2px; }
.tagbox { width: 162px; height: 57px; }
.star { font-style: normal; font-size: 10px; font-weight: 700; color: #f21b0b; margin-left: 6px; vertical-align: 1px; }
.starrow { height: 22px; margin-left: 16px; line-height: 18px; }
.starrow .star { margin-left: 0; vertical-align: 0; }
.date { height: 22px; margin-bottom: 4px; }
.date label { padding-bottom: 1px; letter-spacing: -.05px; }
.day { width: 92px; height: 22px; }
.date svg { margin-left: 5px; }
.dash { width: 4px; margin: 0 4px 0 5px; font-weight: 400; }
.note { height: 84px; }
.note label { padding-bottom: 1px; }
.area { box-sizing: border-box; width: 302px; height: 66px; background: #f5e7a9; border: 1px solid #998a4b; display: flex; align-items: flex-end; justify-content: flex-end; }
.note p { height: 18px; line-height: 21px; }
.submit { margin: 18px 0 0 13px; width: 61px; height: 25px; line-height: 21px; }
.hint { margin-left: 13px; font-size: 12px; line-height: 15px; color: #fb2410; }
.byid { margin-top: 6px; height: 92px; border-radius: 11px; padding-left: 13px; }
h2 { font-weight: 400; font-size: 22px; line-height: 26px; color: #00009c; }
.byid h2 { margin-top: 9px; }
.idrow { display: flex; align-items: center; margin-top: 15px; height: 25px; }
.idrow label { width: 26px; }
.idbox { width: 146px; height: 22px; margin-right: 4px; }
.get { width: 106px; height: 25px; line-height: 21px; }

.results { margin-top: 22px; height: 327px; border-radius: 11px; padding: 9px 13px 0; }
.grid { display: grid; grid-template-columns: 166px 80px 80px 208px 96px; width: 630px; align-items: center; }
.head { height: 22px; margin-top: 16px; font-size: 15px; line-height: 22px; }
.head span { display: flex; align-items: center; gap: 7px; }
.head em { font-style: normal; }
.line { height: 19px; }
.line > span { padding-left: 13px; }
.gray { height: 26px; background: #868686; }
.gray.light { background: #989898; }
.teal { background: #4ca594; }
.teal.light { background: #5db6a6; }
.link { display: flex; align-items: center; color: #2f2366; letter-spacing: .04px; }
.kind { letter-spacing: -.1px; }
.gray .link a { text-decoration: underline; text-underline-offset: 2px; margin-top: -2px; }
footer { width: 660px; text-align: center; font-family: "Open Sans", "Noto Sans", sans-serif; font-weight: 700; font-size: 12.500px; line-height: 15px; color: #000; }
.elapsed { color: #ff7878; }
</style>
